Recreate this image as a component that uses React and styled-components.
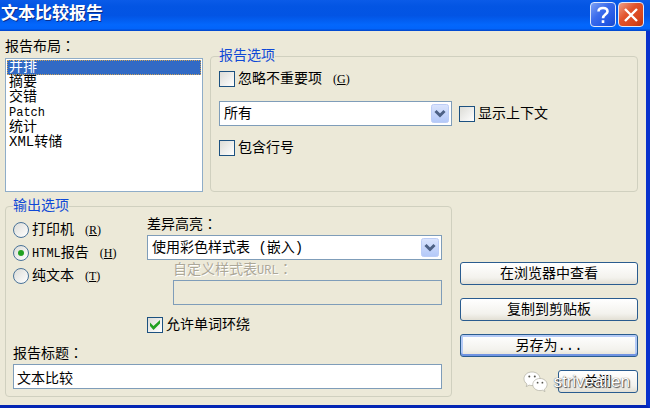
import { useState } from "react";
import styled, { createGlobalStyle } from "styled-components";

const GlobalStyle = createGlobalStyle`
  * {
    box-sizing: border-box;
  }
  body {
    margin: 0;
    background: #ece9d8;
  }
  body, button, input, select {
    font-family: "Liberation Mono", "Noto Sans CJK SC", monospace;
    font-size: 14px;
    line-height: 16px;
    color: #000;
  }
`;

const Window = styled.div`
  position: relative;
  min-height: 100vh;
  display: flex;
  flex-direction: column;
  background: #ece9d8;
  border-right: 4px solid #0831cc;
  border-bottom: 3px solid #0426b4;
`;

const TitleBar = styled.header`
  display: flex;
  align-items: flex-start;
  gap: 2px;
  height: 31px;
  margin-right: -4px;
  padding: 2px 6px 0 1px;
  background: linear-gradient(#0a5be8 0%, #0355e3 20%, #0254e4 50%, #0367fc 80%, #0264fa 92%, #0144c8 100%);
`;

const Title = styled.h1`
  flex: 1;
  margin: 0;
  font-size: 17px;
  line-height: 26px;
  font-weight: bold;
  color: #fff;
  text-shadow: 1px 1px 0 #0a2f8c;
`;

const TitleButton = styled.button`
  display: flex;
  align-items: center;
  justify-content: center;
  width: 26px;
  height: 25px;
  padding: 0;
  border: 1px solid #dfe8fb;
  border-radius: 4px;
  background: ${(p) =>
    p.$close
      ? "linear-gradient(135deg, #f0a088, #e2532c 40%, #d8451c 75%, #b93410)"
      : "linear-gradient(135deg, #7ea2f5, #3c6cec 40%, #2358e4 75%, #1a48cc)"};
`;

const Body = styled.main`
  flex: 1;
  display: flex;
  flex-direction: column;
  gap: 6px;
  padding: 7px 8px 8px 5px;
`;

const Columns = styled.div`
  display: flex;
  gap: ${(p) => p.$gap}px;
`;

const LayoutField = styled.div`
  display: flex;
  flex-direction: column;
  gap: 4px;
  width: 198px;
`;

const Label = styled.label`
  display: block;
  height: 16px;
  line-height: 14px;
  white-space: nowrap;
  ${(p) => p.$disabled && "color: #aca899; text-shadow: 1px 1px 0 #fff;"}
`;

const Colon = styled.span`
  font-family: "Noto Sans CJK TC", sans-serif;
`;

const ListBox = styled.select`
  height: 134px;
  padding: 1px;
  border: 1px solid #8fadc8;
  border-radius: 0;
  background: #fff;
  outline: none;
  overflow: hidden;
`;

const ListItem = styled.option`
  display: flex;
  align-items: flex-end;
  height: 15px;
  min-height: 15px;
  padding: 0 2px;
  font-size: ${(p) => (p.$latin ? "12px" : "14px")};
  line-height: 15px;

  &:checked {
    color: #fff;
    background: #316ac5 linear-gradient(#316ac5, #316ac5);
    outline: 1px dotted #c9a25c;
    outline-offset: -1px;
  }
`;

const Group = styled.fieldset`
  flex: 1;
  min-width: 0;
  margin: ${(p) => p.$top}px 0 0;
  padding: ${(p) => p.$pad};
  border: 1px solid #d0d0bf;
  border-radius: 4px;
`;

const Legend = styled.legend`
  height: 16px;
  padding: 0;
  color: #1049d6;
`;

const Options = styled.div`
  display: grid;
  gap: 14px;
`;

const SelectRow = styled.div`
  display: flex;
  align-items: center;
  gap: 7px;
`;

const Combo = styled.div`
  position: relative;
  width: ${(p) => p.$width || "100%"};

  select {
    display: block;
    width: 100%;
    height: 25px;
    padding: 0 24px 0 4px;
    appearance: none;
    border: 1px solid #7f9db9;
    border-radius: 0;
    background: #fff;
  }
  svg {
    position: absolute;
    top: 3px;
    right: 3px;
    pointer-events: none;
  }
`;

const Choice = styled.label`
  display: flex;
  align-items: center;
  gap: 3px;
  height: 16px;
  white-space: nowrap;

  input {
    flex: none;
    display: grid;
    place-items: center;
    appearance: none;
    width: 16px;
    height: 16px;
    margin: 0;
    border: 1px solid #1c5180;
    background: linear-gradient(135deg, #dcdcd7, #fff);
  }
  input[type="radio"] {
    border-color: #4a7399;
    border-radius: 50%;
  }
  input[type="radio"]:checked::before {
    content: "";
    width: 6px;
    height: 6px;
    border-radius: 50%;
    background: #21a121;
  }
  input[type="checkbox"]:checked::before {
    content: "";
    width: 10px;
    height: 10px;
    background: #21a121;
    clip-path: polygon(0 25%, 35% 60%, 100% 0, 100% 35%, 35% 100%, 0 60%);
  }
`;

const Latin = styled.span`
  font-size: 12px;
`;

const Key = styled.span`
  margin-left: 11px;
  font-family: "Liberation Serif", serif;
  font-size: 12px;
`;

const OutputColumns = styled.div`
  display: grid;
  grid-template-columns: 134px 1fr;
`;

const Radios = styled.div`
  display: flex;
  flex-direction: column;
  gap: 7px;
  padding-top: 6px;
`;

const Highlight = styled.div`
  display: flex;
  flex-direction: column;
  gap: 12px;
`;

const Field = styled.div`
  display: grid;
  gap: 3px;
`;

const CustomSheet = styled(Field)`
  margin: -11px 0 0 26px;
`;

const TextBox = styled.input`
  width: 100%;
  height: 25px;
  padding: 0 3px;
  border: 1px solid #7f9db9;
  border-radius: 0;
  background: #fff;

  &:disabled {
    background: #ece9d8;
  }
`;

const TitleField = styled(Field)`
  margin-top: 12px;
`;

const Actions = styled.div`
  display: flex;
  flex-direction: column;
  align-items: flex-end;
  justify-content: flex-end;
  gap: 13px;
  width: 178px;
  padding-bottom: 4px;
`;

const Button = styled.button`
  width: ${(p) => (p.$small ? "80px" : "100%")};
  height: 23px;
  padding: 0;
  border: 1px solid #2a5c8f;
  border-radius: 3px;
  background: linear-gradient(#fff, #f3f2ed 70%, #e2dfd4);
  ${(p) => p.$default && "box-shadow: inset 0 -2px 0 #6f93e2, inset 0 0 0 2px #b4caf6;"}
`;

const Watermark = styled.div`
  position: absolute;
  right: 16px;
  bottom: 11px;
  display: flex;
  align-items: center;
  gap: 5px;
  pointer-events: none;

  span {
    font-family: "Liberation Sans", sans-serif;
    font-size: 17px;
    line-height: 24px;
    color: #fff;
    text-shadow: 0 0 1px #444, 1px 1px 1px #555;
  }
`;

function ComboBox({ id, label, value, width }) {
  return (
    <Combo $width={width}>
      <select id={id} aria-label={label}>
        <option>{value}</option>
      </select>
      <svg width="18" height="19" viewBox="0 0 18 19">
        <defs>
          <linearGradient id="arrowFill" x1="0" y1="0" x2="0" y2="1">
            <stop offset="0" stopColor="#dbe5fd" />
            <stop offset="1" stopColor="#b3c8f8" />
          </linearGradient>
        </defs>
        <rect x="0.5" y="0.5" width="17" height="18" rx="2" fill="url(#arrowFill)" stroke="#bccdf6" />
        <path d="M4.5 7 L9 11.5 L13.5 7" fill="none" stroke="#4d6185" strokeWidth="3" />
      </svg>
    </Combo>
  );
}

function WeChatIcon() {
  return (
    <svg width="25" height="22" viewBox="0 0 25 22">
      <g fill="#fff" stroke="#a5a396" strokeWidth="0.6">
        <path d="M9 1C4.300 1 1 4 1 7.800c0 2.200 1.200 4 3 5.300L3.200 15.600l3-1.500c1 .3 1.900.4 2.800.4 4.600 0 8-2.900 8-6.700S13.600 1 9 1z" />
        <path d="M17 7.500c-4.200 0-7.200 2.700-7.200 6s3 6.100 7.200 6.100c.9 0 1.700-.1 2.500-.4l2.500 1.400-.7-2.200c1.700-1.200 2.800-2.900 2.800-4.900 0-3.300-3.100-6-7.100-6z" />
      </g>
      <g fill="#55544c">
        <circle cx="6.300" cy="5.500" r="1" />
        <circle cx="11.800" cy="5.500" r="1" />
        <circle cx="14.600" cy="11.700" r="0.900" />
        <circle cx="19.400" cy="11.700" r="0.900" />
      </g>
    </svg>
  );
}

const layouts = ["并排", "摘要", "交错", "Patch", "统计", "XML转储"];

const formats = [
  { id: "print", text: "打印机", key: "R" },
  { id: "html", latin: "HTML", text: "报告", key: "H" },
  { id: "plain", text: "纯文本", key: "T" },
];

export default function App() {
  const [layout, setLayout] = useState("并排");
  const [format, setFormat] = useState("html");

  return (
    <Window>
      <GlobalStyle />
      <TitleBar>
        <Title>文本比较报告</Title>
        <TitleButton aria-label="帮助">
          <svg width="16" height="18" viewBox="0 0 16 18" fill="none" stroke="#fff" strokeWidth="2.600">
            <path d="M3.500 5.500C3.500 3 5.300 2 8 2s4.500 1.200 4.500 3.400C12.500 8.300 8 8.200 8 12.300" />
            <path d="M8 14.200v2.800" />
          </svg>
        </TitleButton>
        <TitleButton $close aria-label="关闭窗口">
          <svg width="16" height="16" viewBox="0 0 16 16" stroke="#fff" strokeWidth="2.400">
            <path d="M2 2l12 12M14 2l-12 12" />
          </svg>
        </TitleButton>
      </TitleBar>
      <Body>
        <Columns $gap={7}>
          <LayoutField>
            <Label htmlFor="layout">
              报告布局<Colon>：</Colon>
            </Label>
            <ListBox id="layout" size={6} value={layout} onChange={(e) => setLayout(e.target.value)}>
              {layouts.map((name) => (
                <ListItem key={name} $latin={name === "Patch"}>
                  {name}
                </ListItem>
              ))}
            </ListBox>
          </LayoutField>
          <Group $top={10} $pad="7px 8px">
            <Legend>报告选项</Legend>
            <Options>
              <Choice>
                <input type="checkbox" />
                <span>
                  忽略不重要项<Key>(<u>G</u>)</Key>
                </span>
              </Choice>
              <SelectRow>
                <ComboBox label="行" value="所有" width="233px" />
                <Choice>
                  <input type="checkbox" />
                  显示上下文
                </Choice>
              </SelectRow>
              <Choice>
                <input type="checkbox" />
                包含行号
              </Choice>
            </Options>
          </Group>
        </Columns>
        <Columns $gap={8}>
          <Group $top={0} $pad="2px 9px 7px 7px">
            <Legend>输出选项</Legend>
            <OutputColumns>
              <Radios>
                {formats.map((f) => (
                  <Choice key={f.id}>
                    <input
                      type="radio"
                      name="format"
                      checked={format === f.id}
                      onChange={() => setFormat(f.id)}
                    />
                    <span>
                      {f.latin && <Latin>{f.latin}</Latin>}
                      {f.text}
                      <Key>(<u>{f.key}</u>)</Key>
                    </span>
                  </Choice>
                ))}
              </Radios>
              <Highlight>
                <Field>
                  <Label htmlFor="highlight">
                    差异高亮<Colon>：</Colon>
                  </Label>
                  <ComboBox id="highlight" value="使用彩色样式表 (嵌入)" />
                </Field>
                <CustomSheet>
                  <Label htmlFor="sheet" $disabled>
                    自定义样式表<Latin>URL</Latin>
                    <Colon>：</Colon>
                  </Label>
                  <TextBox id="sheet" disabled />
                </CustomSheet>
                <Choice>
                  <input type="checkbox" defaultChecked />
                  允许单词环绕
                </Choice>
              </Highlight>
            </OutputColumns>
            <TitleField>
              <Label htmlFor="title">
                报告标题<Colon>：</Colon>
              </Label>
              <TextBox id="title" defaultValue="文本比较" />
            </TitleField>
          </Group>
          <Actions>
            <Button>在浏览器中查看</Button>
            <Button>复制到剪贴板</Button>
            <Button $default>另存为...</Button>
            <Button $small>关闭</Button>
          </Actions>
        </Columns>
      </Body>
      <Watermark>
        <WeChatIcon />
        <span>striveallen</span>
      </Watermark>
    </Window>
  );
}
